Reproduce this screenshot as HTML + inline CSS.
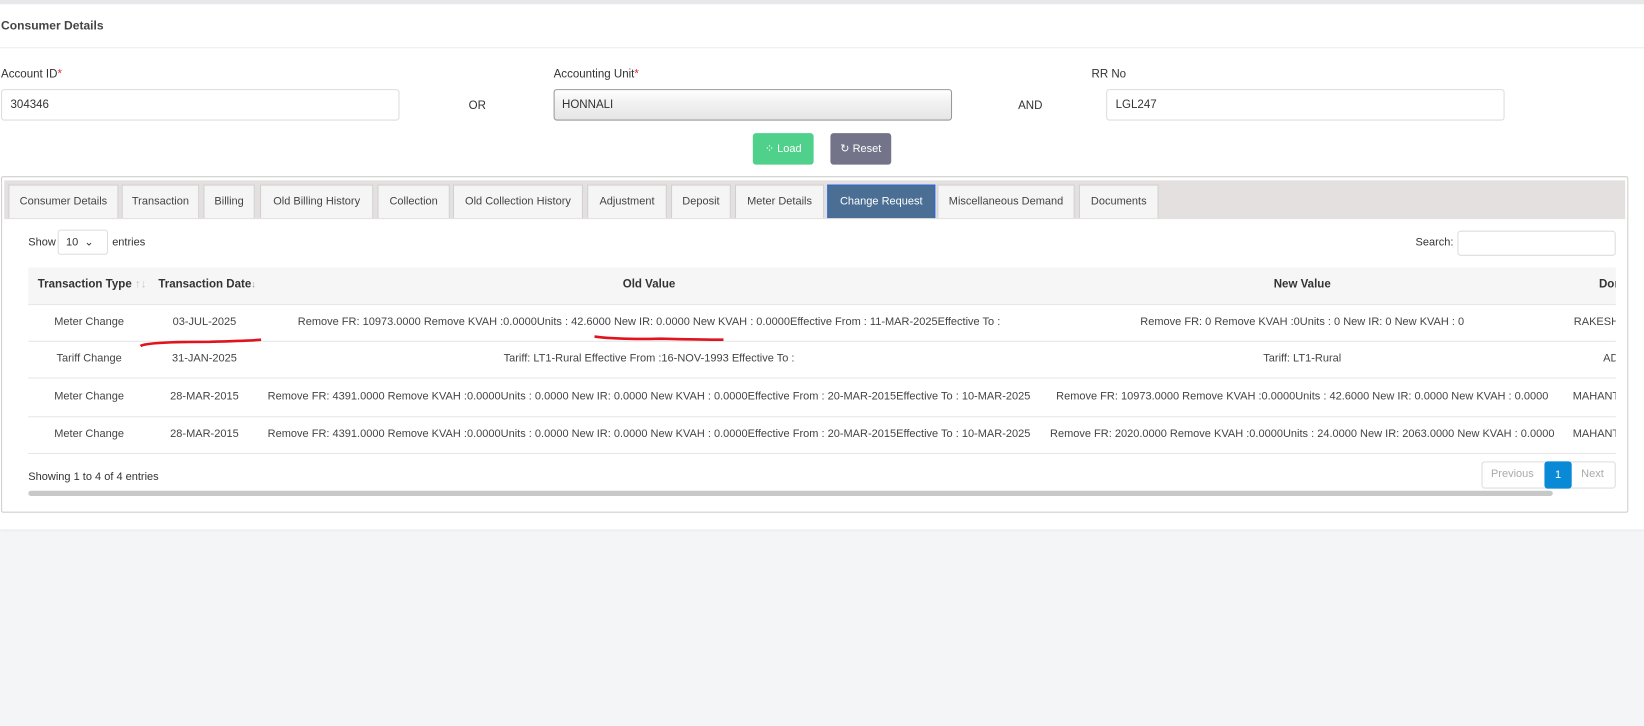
<!DOCTYPE html>
<html><head><meta charset="utf-8"><style>
*{margin:0;padding:0;box-sizing:border-box}
body{width:1644px;height:725px;background:#f4f5f7;font-family:"Liberation Sans",sans-serif;font-size:11px;color:#333;position:relative;overflow:hidden}
#w{position:absolute;left:0;top:0;width:1568px;height:692px;transform:scale(1.0485);transform-origin:0 0}
.a{position:absolute;white-space:nowrap}
.top{position:absolute;left:0;top:0;width:1568px;height:505px;background:#fff;border-top:4px solid #e8e8ea;box-shadow:0 1px 2px #e4e4e4}
.inp{position:absolute;height:30px;border:1px solid #ddd;border-radius:3px;background:#fff;padding:8px 8px;font-size:11px}
.tab{position:absolute;top:176px;height:32px;border:1px solid #d0d0d0;border-bottom:none;background:#f5f5f5;font-size:10.5px;color:#444;text-align:center;line-height:30px}
.c{position:absolute;text-align:center;white-space:nowrap;font-size:10.5px;color:#444}
.hr{position:absolute;left:27px;width:1514px;height:1px;background:#e6e6e6}
</style></head><body><div id="w">
<div class="top"></div>
<div class="a" style="left:1px;top:19px;font-weight:bold;font-size:11.5px;color:#444">Consumer Details</div>
<div class="a" style="left:0;top:45px;width:1568px;height:1px;background:#ececec"></div>
<div class="a" style="left:1px;top:65px">Account ID<span style="color:#d33">*</span></div>
<div class="a" style="left:528px;top:65px">Accounting Unit<span style="color:#d33">*</span></div>
<div class="a" style="left:1041px;top:65px">RR No</div>
<div class="inp" style="left:1px;top:85px;width:380px">304346</div>
<div class="a" style="left:447px;top:95px">OR</div>
<div class="inp" style="left:528px;top:85px;width:380px;border-color:#999;background:linear-gradient(#fff,#f2f2f2 40%,#e6e6e6);padding-left:7px">HONNALI</div>
<div class="a" style="left:971px;top:95px">AND</div>
<div class="inp" style="left:1055px;top:85px;width:380px">LGL247</div>
<div class="a" style="left:718px;top:127px;width:58px;height:30px;background:#4fd18b;border-radius:3px;color:#fff;text-align:center;line-height:30px;font-size:10.5px">⁘ Load</div>
<div class="a" style="left:792px;top:127px;width:58px;height:30px;background:#737389;border-radius:3px;color:#fff;text-align:center;line-height:30px;font-size:10.5px">↻ Reset</div>
<div class="a" style="left:1px;top:168px;width:1552px;height:321px;border:1px solid #cfcfcf;border-radius:2px;background:#fff"></div>
<div class="a" style="left:4px;top:172px;width:1546px;height:37px;background:#e3e0df"></div>
<div class="tab" style="left:8px;width:105px">Consumer Details</div>
<div class="tab" style="left:116px;width:74px">Transaction</div>
<div class="tab" style="left:194px;width:49px">Billing</div>
<div class="tab" style="left:248px;width:108px">Old Billing History</div>
<div class="tab" style="left:360px;width:69px">Collection</div>
<div class="tab" style="left:432px;width:124px">Old Collection History</div>
<div class="tab" style="left:560px;width:76px">Adjustment</div>
<div class="tab" style="left:640px;width:57px">Deposit</div>
<div class="tab" style="left:701px;width:85px">Meter Details</div>
<div class="tab" style="left:789px;width:103px;background:#4b6e94;color:#fff;border:1px solid #2a66d8;border-bottom:none">Change Request</div>
<div class="tab" style="left:894px;width:131px">Miscellaneous Demand</div>
<div class="tab" style="left:1029px;width:76px">Documents</div>
<div class="a" style="left:27px;top:225px;font-size:10.5px">Show</div>
<div class="a" style="left:55px;top:219px;width:48px;height:24px;border:1px solid #ddd;border-radius:3px;padding:5px 7px;font-size:10.5px">10 &nbsp;⌄</div>
<div class="a" style="left:107px;top:225px;font-size:10.5px">entries</div>
<div class="a" style="left:1350px;top:225px;font-size:10.5px">Search:</div>
<div class="a" style="left:1390px;top:220px;width:151px;height:24px;border:1px solid #ddd;border-radius:3px"></div>
<div class="a" style="left:27px;top:255px;width:1514px;height:35px;background:#f6f6f6"></div>
<div class="a" style="left:36px;top:265px;font-weight:bold;font-size:11px">Transaction Type <span style="color:#ccc;font-weight:normal">↑↓</span></div>
<div class="a" style="left:151px;top:265px;font-weight:bold;font-size:11px">Transaction Date<span style="color:#999;font-weight:normal;font-size:9px">↓</span></div>
<div class="c" style="left:519px;width:200px;top:265px;font-weight:bold;color:#333;font-size:11px">Old Value</div>
<div class="c" style="left:1142px;width:200px;top:265px;font-weight:bold;color:#333;font-size:11px">New Value</div>
<div class="a" style="left:1525px;top:265px;width:16px;overflow:hidden;font-weight:bold">Done</div>
<div class="hr" style="top:290px"></div><div class="hr" style="top:325px"></div><div class="hr" style="top:360px"></div><div class="hr" style="top:397px"></div><div class="hr" style="top:432px"></div>
<div class="c" style="left:35px;width:100px;top:301px">Meter Change</div>
<div class="c" style="left:145px;width:100px;top:301px">03-JUL-2025</div>
<div class="c" style="left:219px;width:800px;top:301px">Remove FR: 10973.0000 Remove KVAH :0.0000Units : 42.6000 New IR: 0.0000 New KVAH : 0.0000Effective From : 11-MAR-2025Effective To :</div>
<div class="c" style="left:942px;width:600px;top:301px">Remove FR: 0 Remove KVAH :0Units : 0 New IR: 0 New KVAH : 0</div>
<div class="a" style="left:1501px;top:301px;width:40px;overflow:hidden;font-size:10.5px;color:#444">RAKESH</div>
<div class="c" style="left:35px;width:100px;top:336px">Tariff Change</div>
<div class="c" style="left:145px;width:100px;top:336px">31-JAN-2025</div>
<div class="c" style="left:419px;width:400px;top:336px">Tariff: LT1-Rural Effective From :16-NOV-1993 Effective To :</div>
<div class="c" style="left:1142px;width:200px;top:336px">Tariff: LT1-Rural</div>
<div class="a" style="left:1529px;top:336px;width:12px;overflow:hidden;font-size:10.5px;color:#444">AD</div>
<div class="c" style="left:35px;width:100px;top:372px">Meter Change</div>
<div class="c" style="left:145px;width:100px;top:372px">28-MAR-2015</div>
<div class="c" style="left:219px;width:800px;top:372px">Remove FR: 4391.0000 Remove KVAH :0.0000Units : 0.0000 New IR: 0.0000 New KVAH : 0.0000Effective From : 20-MAR-2015Effective To : 10-MAR-2025</div>
<div class="c" style="left:942px;width:600px;top:372px">Remove FR: 10973.0000 Remove KVAH :0.0000Units : 42.6000 New IR: 0.0000 New KVAH : 0.0000</div>
<div class="a" style="left:1500px;top:372px;width:41px;overflow:hidden;font-size:10.5px;color:#444">MAHANTESH</div>
<div class="c" style="left:35px;width:100px;top:408px">Meter Change</div>
<div class="c" style="left:145px;width:100px;top:408px">28-MAR-2015</div>
<div class="c" style="left:219px;width:800px;top:408px">Remove FR: 4391.0000 Remove KVAH :0.0000Units : 0.0000 New IR: 0.0000 New KVAH : 0.0000Effective From : 20-MAR-2015Effective To : 10-MAR-2025</div>
<div class="c" style="left:942px;width:600px;top:408px">Remove FR: 2020.0000 Remove KVAH :0.0000Units : 24.0000 New IR: 2063.0000 New KVAH : 0.0000</div>
<div class="a" style="left:1500px;top:408px;width:41px;overflow:hidden;font-size:10.5px;color:#444">MAHANTESH</div>
<div class="a" style="left:27px;top:449px;font-size:10.5px">Showing 1 to 4 of 4 entries</div>
<div class="a" style="left:1413px;top:440px;width:128px;height:26px;border:1px solid #ddd;border-radius:3px"></div>
<div class="a" style="left:1422px;top:446px;font-size:10.5px;color:#aaa">Previous</div>
<div class="a" style="left:1473px;top:440px;width:26px;height:26px;background:#0a8ad6;border-radius:3px;color:#fff;text-align:center;line-height:26px;font-size:10.5px">1</div>
<div class="a" style="left:1508px;top:446px;font-size:10.5px;color:#aaa">Next</div>
<div class="a" style="left:27px;top:468px;width:1454px;height:5px;background:#c8c8c8;border-radius:3px"></div>
<svg class="a" style="left:0;top:0" width="1568" height="692"><path d="M134 330 Q140 326 200 326 Q240 325 249 324" stroke="#e0141e" stroke-width="2.5" fill="none"/><path d="M567 321 Q590 324 630 323 Q670 324 690 324" stroke="#e0141e" stroke-width="2.5" fill="none"/></svg>
</div></body></html>
